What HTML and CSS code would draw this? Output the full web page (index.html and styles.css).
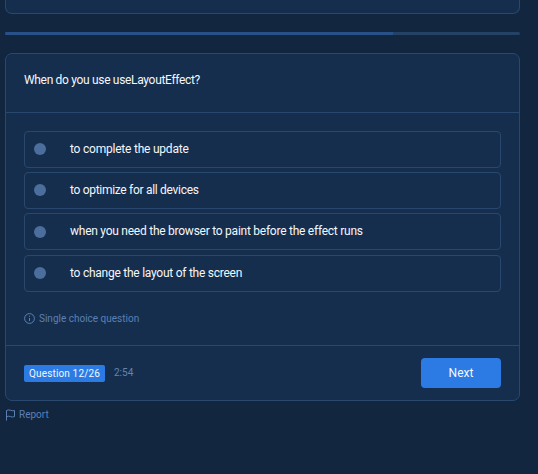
FILE: index.html
```html
<!DOCTYPE html>
<html lang="en">
<head>
<meta charset="utf-8">
<title>Quiz</title>
<link rel="stylesheet" href="styles.css">
</head>
<body>
<main class="page">
  <div class="card card-previous"></div>
  <div class="progress"><div class="progress-bar"></div></div>
  <section class="card question">
    <header class="question-header"><span class="title">When do you use useLayoutEffect?</span></header>
    <div class="question-body">
      <div class="option"><i class="dot"></i><span class="option-short">to complete the update</span></div>
      <div class="option"><i class="dot"></i><span class="option-wide">to optimize for all devices</span></div>
      <div class="option"><i class="dot dot-low"></i><span>when you need the browser to paint before the effect runs</span></div>
      <div class="option option-last"><i class="dot"></i><span>to change the layout of the screen</span></div>
      <div class="hint">
        <svg width="11" height="11" viewBox="0 0 11 11" fill="none" stroke="currentColor"><circle cx="5.5" cy="5.5" r="4.9"/><path d="M5.5 5v3M5.5 2.8v1"/></svg>
        <span>Single choice question</span>
      </div>
    </div>
    <footer class="question-footer">
      <span class="badge"><span>Question 12/26</span></span>
      <span class="time">2:54</span>
      <button class="next">Next</button>
    </footer>
  </section>
  <div class="report">
    <svg width="11" height="12" viewBox="0 0 11 12" fill="none" stroke="currentColor" stroke-linejoin="round"><path d="M1.500 11.500V1.500Q3.200.4 5.500 1.300T9.500 1.500V7.500Q7.500 8.500 5.500 7.600T1.500 7.700"/></svg>
    <span>Report</span>
  </div>
</main>
</body>
</html>
```
FILE: styles.css
```css
* { box-sizing: border-box; }
body {
  margin: 0;
  background: #12263f;
  color: #f4f7fb;
  font: 12px/18px Roboto, "Liberation Sans", sans-serif;
  overflow: hidden;
}
.page { width: 515px; margin-left: 5px; }
.card {
  background: #152e4d;
  border: 1px solid #29486d;
  border-radius: 7px;
}
.card-previous { height: 14px; border-top: 0; border-radius: 0 0 7px 7px; }
.progress {
  height: 3px;
  margin: 18px 0;
  border-radius: 2px;
  background: #244166;
  overflow: hidden;
}
.progress-bar { width: 388px; height: 3px; background: #285089; }
.question { height: 348px; display: flex; flex-direction: column; }
.question-header {
  height: 58px;
  padding: 0 18px 6px;
  display: flex;
  align-items: center;
}
.title { letter-spacing: -0.32px; }
.question-body {
  height: 234px;
  padding: 18px 18px 0;
  border-top: 1px solid #29486d;
  border-bottom: 1px solid #29486d;
}
.option {
  height: 37px;
  margin-bottom: 4px;
  padding: 0 9px;
  display: flex;
  align-items: center;
  gap: 24px;
  border: 1px solid #29486d;
  border-radius: 4px;
  letter-spacing: -0.25px;
}
.option span { padding-bottom: 1px; }
.option-short { letter-spacing: -0.22px; }
.option-wide { letter-spacing: -0.3px; }
.option-last { margin-top: 5px; }
.dot { width: 12px; height: 12px; margin-bottom: 1px; border-radius: 50%; background: #4b6e9c; }
.dot-low { margin-bottom: 0; }
.hint {
  display: flex;
  align-items: center;
  gap: 4px;
  margin-top: 18px;
  font-size: 10px;
  color: #5b80b5;
}
.hint svg { margin-bottom: 1px; }
.question-footer {
  flex: 1;
  padding: 0 18px;
  display: flex;
  align-items: center;
}
.badge {
  width: 81px;
  height: 17px;
  padding-top: 1px;
  display: flex;
  align-items: center;
  justify-content: center;
  border-radius: 2px;
  background: #2c7be5;
  font-size: 10px;
  letter-spacing: 0.15px;
}
.time { margin-left: 9px; font-size: 10px; color: #6484b0; }
.next {
  width: 80px;
  height: 30px;
  margin-left: auto;
  padding: 0;
  border: 0;
  border-radius: 4px;
  background: #2c7be5;
  color: #f4f7fb;
  font: inherit;
}
.report {
  display: flex;
  align-items: center;
  gap: 3px;
  margin-top: 5px;
  font-size: 10px;
  color: #5b80b5;
}
```
